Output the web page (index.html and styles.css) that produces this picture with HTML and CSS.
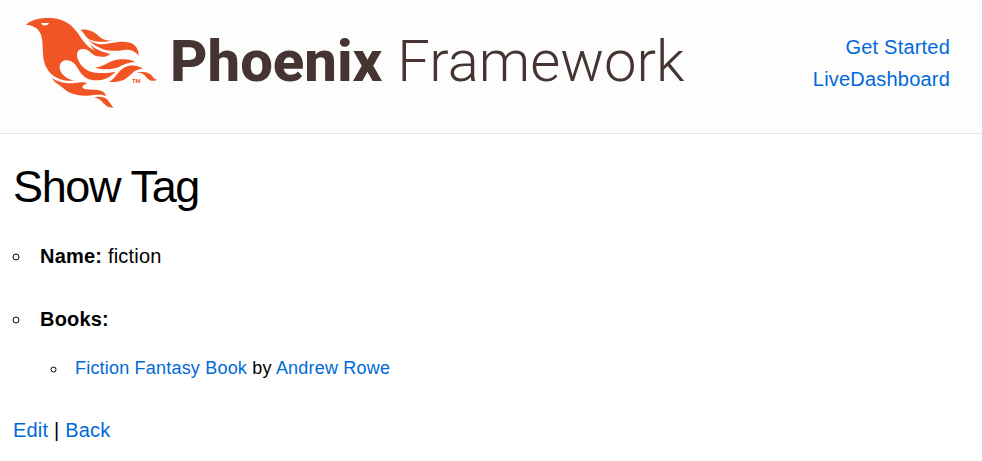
FILE: index.html
```html
<!DOCTYPE html>
<html lang="en">
<head>
<meta charset="utf-8">
<title>Show Tag</title>
<link rel="stylesheet" href="styles.css">
</head>
<body>
<header class="site-header">
  <a class="logo" href="#">
    <svg class="bird" viewBox="0 0 420 315" aria-hidden="true">
      <path d="M18 45C30 30 60 22 95 24C140 27 160 52 174 70C188 92 203 115 233 127C248 133 260 134 271 132C262 141 247 142 232 139C215 135 208 118 190 117C172 116 168 132 173 146C182 170 200 184 225 188C250 190 270 189 286 185C270 206 240 214 215 210C185 204 178 180 165 163C150 145 122 146 119 168C117 188 135 206 163 212C130 214 95 205 78 170C66 145 70 120 67 95C65 65 50 45 18 45Z"/>
      <path d="M182 59C205 57 222 65 235 77C247 89 260 92 274 91C262 97 235 97 215 91C197 85 194 70 182 59Z"/>
      <path d="M203 88C225 106 245 104 270 100C300 94 325 92 342 104C353 113 356 125 356 137C345 124 332 118 312 120C285 124 262 124 242 115C224 107 212 98 203 88Z"/>
      <path d="M202 94C215 112 236 124 271 132C255 137 240 134 228 128Z"/>
      <path d="M226 173C255 170 262 153 300 148C322 146 338 150 346 157C325 156 312 164 297 171C275 180 245 180 226 173Z"/>
      <path d="M267 215C290 205 295 175 325 168C345 164 360 170 368 176C345 178 338 188 325 200C308 215 288 217 267 215Z"/>
      <path d="M350 187C372 184 385 186 394 195C400 203 403 208 411 209C398 216 388 212 380 203C370 191 362 188 350 187Z"/>
      <path d="M97 205C115 217 140 222 165 219C182 216 192 215 202 221C190 222 184 230 190 235C200 242 225 236 245 243C253 246 257 252 258 258C240 251 225 256 200 257C165 258 145 248 130 235C115 222 102 218 97 205Z"/>
      <path d="M222 262C240 258 255 262 263 270C272 280 274 288 281 293C265 294 255 285 247 276C240 268 232 264 222 262Z"/>
      <path class="eye" d="M63 39L87 39C84 48 68 50 63 39Z"/>
      <text class="mark" x="336" y="218">TM</text>
    </svg>
    <span class="wordmark"><span class="strong">Phoenix</span><span class="light">Framework</span></span>
  </a>
  <nav>
    <ul class="nav-links">
      <li><a href="#">Get Started</a></li>
      <li><a href="#">LiveDashboard</a></li>
    </ul>
  </nav>
</header>
<main class="content">
  <h1>Show Tag</h1>
  <ul class="details">
    <li><strong>Name:</strong> fiction</li>
    <li><strong>Books:</strong>
      <ul class="books">
        <li><a href="#">Fiction Fantasy Book</a> by <a href="#">Andrew Rowe</a></li>
      </ul>
    </li>
  </ul>
  <p class="actions"><a href="#">Edit</a> | <a href="#">Back</a></p>
</main>
</body>
</html>
```
FILE: styles.css
```css
* { box-sizing: border-box; }

body {
  margin: 0;
  background: #fff;
  color: #000;
  font: 20px/32px "Liberation Sans", Arial, sans-serif;
  letter-spacing: 0.01em;
}

a { color: #0069d9; text-decoration: none; }

ul { margin: 0; padding: 0; }

.site-header {
  display: flex;
  justify-content: space-between;
  align-items: flex-start;
  padding: 10px 32px 18px 20px;
  background: #fdfdfd;
  border-bottom: 1px solid #e3e3e3;
}

.logo { display: flex; align-items: flex-start; gap: 10px; }

.bird { width: 140px; height: 105px; fill: #f15524; }
.bird .eye { fill: #fdfdfd; }
.mark { font: bold 17px Roboto, sans-serif; letter-spacing: 0; }

.wordmark {
  display: flex;
  gap: 15px;
  padding-top: 16px;
  color: #463432;
  font: 58px/70px Roboto, sans-serif;
  letter-spacing: 0;
}

.strong { font-weight: 800; }
.light { font-weight: 300; }

.nav-links { padding-top: 21px; list-style: none; text-align: right; }

.content { padding: 0 13px; }

h1 {
  margin: 0;
  padding: 26px 0;
  font-size: 45px;
  font-weight: 400;
  line-height: 54px;
  letter-spacing: -0.03em;
}

.details { list-style: circle inside; }
.details > li { margin-bottom: 31px; }

.books {
  margin: 19px 0 0 38px;
  font-size: 18px;
  line-height: 29px;
  list-style: circle inside;
}

.actions { margin: 0; }
```
